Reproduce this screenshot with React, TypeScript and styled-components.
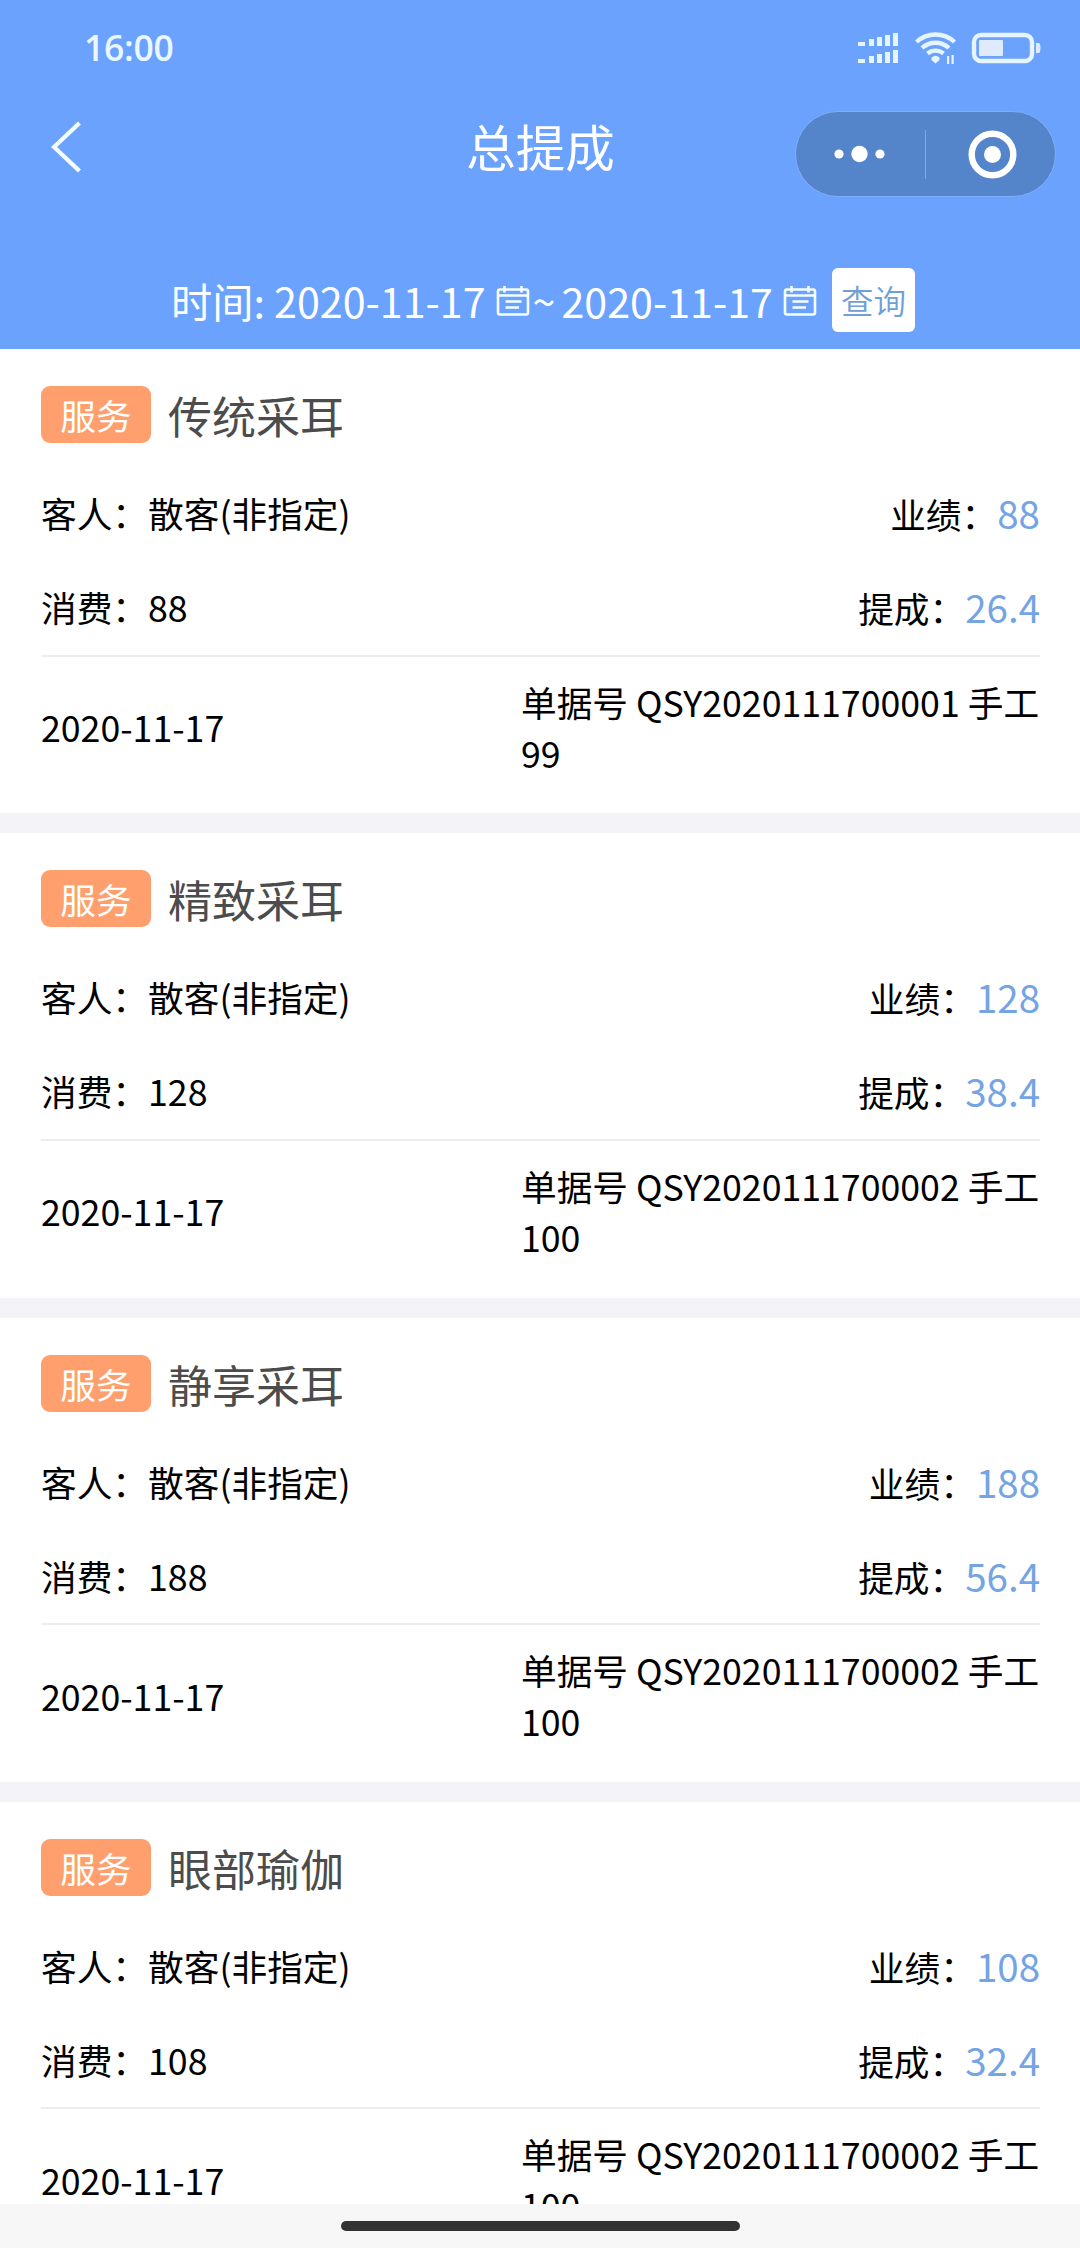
import React from "react";
import styled, { createGlobalStyle } from "styled-components";

const GlobalStyle = createGlobalStyle`
  * { box-sizing: border-box; }
  html, body { margin: 0; padding: 0; background: #fff; overflow: hidden; }
  body { font-family: "Noto Sans CJK SC", "Noto Sans", sans-serif; font-weight: 400; color: #000; }
`;

const Screen = styled.div`
  width: 1080px;
  height: 2248px;
  display: flex;
  flex-direction: column;
  overflow: hidden;
  background: #fff;
`;

const Header = styled.header`
  flex: none;
  height: 349px;
  display: flex;
  flex-direction: column;
  background: #6aa2fd;
  color: #fff;
`;

const StatusBar = styled.div`
  height: 96px;
  padding: 0 39px 0 84px;
  display: flex;
  align-items: center;
  justify-content: space-between;
  color: #eaf7fe;
`;

const Clock = styled.span`
  margin-bottom: 3px;
  font: 600 35.5px/48px "Open Sans", "Noto Sans", sans-serif;
  letter-spacing: -0.3px;
`;

const StatusIcons = styled.svg`
  width: 184px;
  height: 34px;
`;

const NavBar = styled.nav`
  height: 104px;
  padding: 0 25px 0 51px;
  display: grid;
  grid-template-columns: 259px 1fr 259px;
  align-items: center;
`;

const BackIcon = styled.svg`
  width: 30px;
  height: 52px;
  margin-bottom: 3px;
`;

const Title = styled.h1`
  margin: 0 0 5px -25px;
  font-size: 49.5px;
  font-weight: 400;
  line-height: 72px;
  text-align: center;
`;

const Capsule = styled.div`
  width: 261px;
  height: 86px;
  margin: 12px 0 0 -1px;
  display: flex;
  align-items: center;
  border: 1px solid #7fb0f7;
  border-radius: 43px;
  background: #5484ca;
`;

const CapsuleIcon = styled.svg`
  width: 129px;
  height: 84px;
`;

const CapsuleDivider = styled.div`
  width: 1px;
  height: 49px;
  background: #7fa9e6;
`;

const FilterBar = styled.div`
  height: 64px;
  margin-top: 68px;
  padding-left: 171px;
  display: flex;
  align-items: center;
  font-size: 41.2px;
  line-height: 60px;
  white-space: pre;
`;

const CalendarIcon = styled.svg`
  width: 34px;
  height: 32px;
  margin: 4px 0 0 10px;
`;

const Tilde = styled.span`
  width: 28px;
  padding-left: 3px;
  margin-right: 4px;
`;

const QueryButton = styled.button`
  width: 83px;
  height: 64px;
  margin-left: 15px;
  padding: 0;
  border: 0;
  border-radius: 6px;
  background: #fff;
  color: #6f9fd4;
  font: inherit;
  font-size: 32.5px;
  font-weight: 350;
  line-height: 64px;
`;

const List = styled.main`
  flex: 1;
  min-height: 0;
  overflow: hidden;
`;

const Card = styled.article`
  height: 484.3px;
  padding: 37px 40px 0 41px;
  border-bottom: 20px solid #f4f4f8;
  font-size: 35.7px;
`;

const CardHead = styled.div`
  height: 57px;
  display: flex;
  align-items: center;
`;

const Tag = styled.span`
  width: 110px;
  height: 57px;
  border-radius: 9px;
  background: #fe9f6d;
  color: #fff;
  line-height: 57px;
  text-align: center;
`;

const ServiceName = styled.h2`
  margin: 2px 0 0 17px;
  color: #4c4c4c;
  font-size: 44px;
  font-weight: 400;
  line-height: 57px;
`;

const InfoRow = styled.div<{ $gap: number }>`
  height: 52px;
  margin-top: ${(p) => p.$gap}px;
  display: flex;
  align-items: center;
  justify-content: space-between;
  line-height: 52px;
`;

const Amount = styled.span`
  color: #74a4e3;
  font-size: 38.5px;
`;

const Divider = styled.div`
  height: 2px;
  margin-top: 21.5px;
  background: #ededee;
`;

const CardFoot = styled.div`
  height: 102px;
  margin-top: 19px;
  display: grid;
  grid-template-columns: 480px 519px;
  align-items: center;
  line-height: 51px;
`;

const BottomBar = styled.footer`
  flex: none;
  height: 44px;
  padding-top: 17px;
  display: flex;
  justify-content: center;
  background: #f7f7f7;
`;

const HomeIndicator = styled.div`
  width: 399px;
  height: 10px;
  border-radius: 5px;
  background: #323232;
`;

const BARS = [
  { x: 1, w: 7, h: 4 },
  { x: 12, w: 5, h: 7 },
  { x: 20, w: 5, h: 9 },
  { x: 28, w: 5, h: 11 },
  { x: 36, w: 5, h: 13 },
];

const Calendar = () => (
  <CalendarIcon viewBox="0 0 34 32" fill="none" stroke="#f6ffff" strokeWidth="2.6">
    <rect x="2" y="3.500" width="30" height="25" rx="2" />
    <path d="M2 9.500H32M8.500 0V6.500M25.500 0V6.500M9.500 15.500H25.500M9.500 21.500H23" />
  </CalendarIcon>
);

const records = [
  { name: "传统采耳", spend: "88", sales: "88", commission: "26.4", order: "QSY2020111700001", hand: "99" },
  { name: "精致采耳", spend: "128", sales: "128", commission: "38.4", order: "QSY2020111700002", hand: "100" },
  { name: "静享采耳", spend: "188", sales: "188", commission: "56.4", order: "QSY2020111700002", hand: "100" },
  { name: "眼部瑜伽", spend: "108", sales: "108", commission: "32.4", order: "QSY2020111700002", hand: "100" },
];

export default function App() {
  return (
    <>
      <GlobalStyle />
      <Screen>
        <Header>
          <StatusBar>
            <Clock>16:00</Clock>
            <StatusIcons viewBox="0 0 184 34" fill="none">
              <g fill="#e6f4fd">
                {BARS.map((b) => (
                  <React.Fragment key={b.x}>
                    <rect x={b.x} y={15 - b.h} width={b.w} height={b.h} />
                    <rect x={b.x} y={32 - b.h} width={b.w} height={b.h} />
                  </React.Fragment>
                ))}
                <path d="M74.500 26.500q4-3.500 8 0v2.500l-4 3.500-4-3.500z" />
                <path d="M90 25h2.200v8H90zM94.500 24h2.200v9h-2.200z" />
              </g>
              <g stroke="#e6f4fd" strokeWidth="4.400">
                <path d="M59.500 11a28 28 0 0 1 38 0M65 17a20 20 0 0 1 27 0M70.500 22.500a12.500 12.500 0 0 1 16 0" />
                <rect x="117" y="4" width="58" height="26" rx="7" />
              </g>
              <rect x="122" y="9" width="24" height="16" rx="1" fill="#dfebfc" />
              <path d="M179 12h2.500q2 0 2 5t-2 5H179z" fill="#dfebfc" />
            </StatusIcons>
          </StatusBar>
          <NavBar>
            <BackIcon viewBox="0 0 30 52" fill="none" stroke="#f6ffff" strokeWidth="4.200">
              <path d="M28.500 2L3 26L28.500 50" />
            </BackIcon>
            <Title>总提成</Title>
            <Capsule>
              <CapsuleIcon viewBox="0 0 129 84" fill="#fff">
                <circle cx="43" cy="42" r="4.600" />
                <circle cx="63.500" cy="42" r="8.200" />
                <circle cx="84" cy="42" r="4.600" />
              </CapsuleIcon>
              <CapsuleDivider />
              <CapsuleIcon viewBox="0 0 129 84">
                <circle cx="66.500" cy="42.500" r="20.800" fill="none" stroke="#fff" strokeWidth="6.400" />
                <circle cx="66.500" cy="42.500" r="8.500" fill="#fff" />
              </CapsuleIcon>
            </Capsule>
          </NavBar>
          <FilterBar>
            <span>时间: 2020-11-17</span>
            <Calendar />
            <Tilde>~</Tilde>
            <span>2020-11-17</span>
            <Calendar />
            <QueryButton>查询</QueryButton>
          </FilterBar>
        </Header>
        <List>
          {records.map((r) => (
            <Card key={r.name}>
              <CardHead>
                <Tag>服务</Tag>
                <ServiceName>{r.name}</ServiceName>
              </CardHead>
              <InfoRow $gap={44}>
                <span>客人：散客(非指定)</span>
                <span>业绩：<Amount>{r.sales}</Amount></span>
              </InfoRow>
              <InfoRow $gap={42}>
                <span>消费：{r.spend}</span>
                <span>提成：<Amount>{r.commission}</Amount></span>
              </InfoRow>
              <Divider />
              <CardFoot>
                <span>2020-11-17</span>
                <span>单据号 {r.order} 手工 {r.hand}</span>
              </CardFoot>
            </Card>
          ))}
        </List>
        <BottomBar>
          <HomeIndicator />
        </BottomBar>
      </Screen>
    </>
  );
}
